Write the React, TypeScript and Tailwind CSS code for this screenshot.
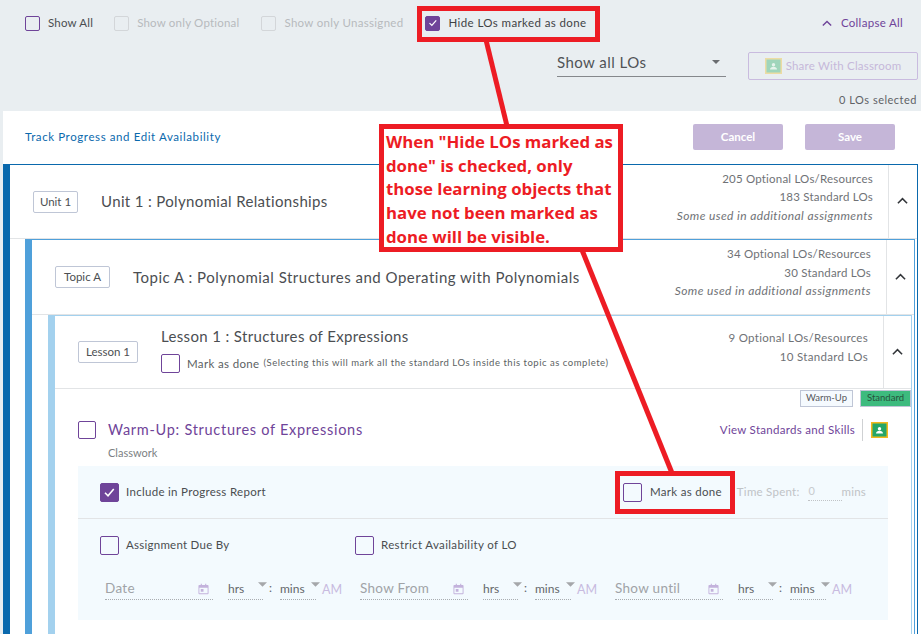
import React from "react";

const FONT = "font-['Lato','Noto_Sans',sans-serif]";

function Box({ size = 18, checked = false, muted = false }: { size?: number; checked?: boolean; muted?: boolean }) {
  const b = muted ? "border-[#d3d6d9]" : "border-[#6f4499]";
  return (
    <span
      style={{ width: size, height: size }}
      className={`shrink-0 flex items-center justify-center rounded-[2px] border ${b} ${checked ? "bg-[#6f4499]" : ""}`}
    >
      {checked && (
        <svg viewBox="0 0 16 16" className="w-[75%] h-[75%]" fill="none" stroke="#fff" strokeWidth="2">
          <path d="M2.5 8.5 L6.3 12.2 L13.5 3.8" />
        </svg>
      )}
    </span>
  );
}

function Classroom({ muted = false }: { muted?: boolean }) {
  return (
    <svg viewBox="0 0 17 16" className="w-[17px] h-[16px] shrink-0">
      <rect width="17" height="16" fill={muted ? "#ecdca4" : "#f4b81c"} />
      <rect x="1.5" y="1.5" width="14" height="13" fill={muted ? "#9fd5bb" : "#25a667"} />
      <circle cx="8.5" cy="6.8" r="1.7" fill={muted ? "#e5f3ec" : "#fff"} />
      <path d="M5 11.5c0-1.900 1.700-2.700 3.500-2.700s3.500.8 3.500 2.700z" fill={muted ? "#e5f3ec" : "#fff"} />
    </svg>
  );
}

function Chevron({ className = "" }: { className?: string }) {
  return (
    <svg viewBox="0 0 12 8" className={className} fill="none" stroke="currentColor" strokeWidth="1.7">
      <path d="M1 6.5 L6 1.500 L11 6.500" />
    </svg>
  );
}

function Caret({ className = "" }: { className?: string }) {
  return (
    <svg viewBox="0 0 10 5" className={className}>
      <path d="M0 0h10L5 5z" fill="currentColor" />
    </svg>
  );
}

function Header({
  label,
  labelW,
  title,
  titleClass,
  lines,
  h,
  textRight,
  cell,
}: {
  label: string;
  labelW: number;
  title: string;
  titleClass: string;
  lines: string[];
  h: number;
  textRight: number;
  cell: number;
}) {
  return (
    <div style={{ height: h }} className="flex border-b border-[#e2e4e6]">
      <div className="pl-[23px] flex-1 flex items-center">
        <span
          style={{ width: labelW }}
          className="h-[22px] flex items-center justify-center border border-[#bfc6d6] rounded-[2px] text-[11.5px] text-[#4c4f52] bg-white"
        >
          {label}
        </span>
        <span className={`ml-[23px] text-[15px] text-[#4b4e52] ${titleClass}`}>{title}</span>
      </div>
      <div
        style={{ paddingRight: textRight }}
        className="flex flex-col justify-center items-end pb-[8px] text-[11.5px] leading-[18.5px] tracking-[0.2px] text-[#6f7276]"
      >
        {lines.map((l) => (
          <span key={l}>{l}</span>
        ))}
        <span className="italic text-[12px] tracking-[0.4px]">Some used in additional assignments</span>
      </div>
      <div style={{ width: cell }} className="border-l border-[#e2e4e6] flex items-center justify-center pb-[1px] pr-[1px] text-[#33363a]">
        <Chevron className="w-[11px] h-[8px]" />
      </div>
    </div>
  );
}

function Calendar() {
  return (
    <svg viewBox="0 0 12 12" className="w-[11px] h-[12px]" fill="#c3b2dc">
      <path d="M1.5 1.5h1.5V.3h1.2v1.2h3.6V.3H9v1.2h1.5a1 1 0 0 1 1 1v8.2a1 1 0 0 1-1 1h-9a1 1 0 0 1-1-1V2.500a1 1 0 0 1 1-1zm0 3v6.200h9V4.500z" />
      <rect x="3" y="6" width="3" height="3" />
    </svg>
  );
}

function Picker({ w, text }: { w: number; text: string }) {
  return (
    <div style={{ width: w }} className="relative h-[22px] border-b border-dotted border-[#a9adb1] text-[12px] leading-[22px] text-[#63676b]">
      <span>{text}</span>
      <Caret className="absolute right-[-4px] top-[4px] w-[9px] h-[5px] text-[#a5a7aa]" />
    </div>
  );
}

function DateGroup({ label }: { label: string }) {
  return (
    <div className="w-[255px] flex items-start shrink-0">
      <div className="w-[108px] h-[22px] flex items-center justify-between border-b border-dotted border-[#a9adb1] pr-[4px]">
        <span className="text-[13.5px] tracking-[0.3px] text-[#a0a3a7]">{label}</span>
        <Calendar />
      </div>
      <div className="ml-[15px]">
        <Picker w={35} text="hrs" />
      </div>
      <span className="w-[17px] pl-[6px] text-[12px] leading-[20px] text-[#63676b]">:</span>
      <Picker w={36} text="mins" />
      <span className="ml-[6px] text-[12.5px] leading-[24px] text-[#c8bbe0]">AM</span>
    </div>
  );
}

export default function App() {
  return (
    <div className={`relative w-[921px] h-[634px] overflow-hidden bg-[#e9eef1] ${FONT}`}>
      {/* Filter bar */}
      <div className="h-[111px] relative">
        <div className="flex items-center h-[46px] pl-[25px] text-[11.5px] tracking-[0.2px]">
          <Box size={15} />
          <span className="ml-[8px] text-[#4a4d50]">Show All</span>
          <span className="ml-[21px]"><Box size={15} muted /></span>
          <span className="ml-[8px] text-[#b7babd]">Show only Optional</span>
          <span className="ml-[22px]"><Box size={15} muted /></span>
          <span className="ml-[8px] text-[#b7babd] tracking-[0.3px]">Show only Unassigned</span>
          <span className="ml-[22px]"><Box size={15} checked /></span>
          <span className="ml-[8px] text-[#3f4245] tracking-[0.4px]">Hide LOs marked as done</span>
          <span className="flex items-center ml-auto mr-[18px] text-[#6f4499]">
            <Chevron className="w-[10px] h-[7px]" />
            <span className="ml-[9px] tracking-[0.3px]">Collapse All</span>
          </span>
        </div>
        <div className="flex items-start justify-end pr-[3px] mt-[6px]">
          <div className="w-[169px] h-[25px] border-b border-[#85888c] flex items-center justify-between pb-[4px] pr-[6px] text-[15px] tracking-[0.45px] text-[#505356]">
            <span>Show all LOs</span>
            <Caret className="w-[8px] h-[4px] text-[#6a6d70]" />
          </div>
          <div className="ml-[22px] w-[170px] h-[28px] border border-[#c9bbdf] rounded-[2px] flex items-center justify-center gap-[4px] text-[11.5px] tracking-[0.2px] text-[#c6b8da]">
            <Classroom muted />
            <span>Share With Classroom</span>
          </div>
        </div>
        <div className="absolute right-[4px] top-[92px] text-[11px] tracking-[0.5px] text-[#5f6266]">0 LOs selected</div>
      </div>

      {/* Panel */}
      <div className="ml-[3px] bg-white h-[523px]">
        <div className="h-[53px] flex items-center pb-[2px] pl-[22px] pr-[26px]">
          <span className="text-[11.5px] tracking-[0.6px] text-[#0a69ad]">Track Progress and Edit Availability</span>
          <button className="ml-auto w-[90px] h-[26px] rounded-[2px] bg-[#c5b6d8] text-white text-[11.5px] font-bold">Cancel</button>
          <button className="ml-[22px] w-[90px] h-[26px] rounded-[2px] bg-[#c5b6d8] text-white text-[11.5px] font-bold">Save</button>
        </div>

        {/* Unit */}
        <div className="mr-[3px] border-t border-r border-l-[7px] border-[#0a69ad] h-[470px]">
          <Header
            label="Unit 1"
            labelW={45}
            title="Unit 1 : Polynomial Relationships"
            titleClass="tracking-[0.35px]"
            lines={["205 Optional LOs/Resources", "183 Standard LOs"]}
            h={74}
            textRight={15}
            cell={29}
          />
          {/* Topic */}
          <div className="ml-[15px] mr-[2px] border-t border-r border-l-[7px] border-[#4fa0da] h-[400px]">
            <Header
              label="Topic A"
              labelW={55}
              title="Topic A : Polynomial Structures and Operating with Polynomials"
              titleClass="tracking-[0.5px]"
              lines={["34 Optional LOs/Resources", "30 Standard LOs"]}
              h={75}
              textRight={15}
              cell={28}
            />
            {/* Lesson */}
            <div className="ml-[16px] mr-[2px] border-t border-r border-l-[7px] border-[#a3d1ee] h-[330px]">
              <div className="h-[73px] flex border-b border-[#e2e4e6]">
                <div className="pl-[23px] flex items-center">
                  <span className="w-[60px] h-[22px] flex items-center justify-center border border-[#bfc6d6] rounded-[2px] text-[11.5px] text-[#4c4f52]">
                    Lesson 1
                  </span>
                </div>
                <div className="ml-[23px] flex-1 pt-[10px]">
                  <div className="text-[15px] leading-[20px] tracking-[0.35px] text-[#4b4e52]">Lesson 1 : Structures of Expressions</div>
                  <div className="flex items-center mt-[8px]">
                    <Box size={19} />
                    <span className="ml-[7px] text-[11.5px] tracking-[0.35px] text-[#5c5f63]">Mark as done</span>
                    <span className="ml-[4px] text-[9.5px] tracking-[0.52px] text-[#5c5f63]">
                      (Selecting this will mark all the standard LOs inside this topic as complete)
                    </span>
                  </div>
                </div>
                <div className="flex flex-col items-end pt-[13px] pr-[15px] text-[11.5px] leading-[18.5px] tracking-[0.3px] text-[#6f7276]">
                  <span>9 Optional LOs/Resources</span>
                  <span>10 Standard LOs</span>
                </div>
                <div className="w-[28px] border-l border-[#e2e4e6] flex items-center justify-center pb-[1px] pr-[1px] text-[#33363a]">
                  <Chevron className="w-[11px] h-[8px]" />
                </div>
              </div>

              {/* Learning object */}
              <div>
                <div className="flex justify-end gap-[7px] h-[18px] pt-[1px] items-start">
                  <span className="w-[53px] h-[17px] border border-[#bfc6d6] bg-[#f5fafe] flex items-center justify-center text-[9.5px] text-[#55585c]">Warm-Up</span>
                  <span className="w-[51px] h-[17px] border border-[#bfc6d6] bg-[#3dbb7e] flex items-center justify-center text-[9.5px] text-[#27513c]">Standard</span>
                </div>
                <div className="pl-[23px] pr-[23px]">
                  <div className="flex items-center mt-[13px] h-[19px]">
                    <Box size={18} />
                    <span className="ml-[12px] text-[14.5px] tracking-[0.72px] text-[#6f4499]">Warm-Up: Structures of Expressions</span>
                    <span className="ml-auto text-[11.5px] tracking-[0.3px] text-[#6f4499]">View Standards and Skills</span>
                    <span className="ml-[7px] h-[22px] border-l border-[#cfd1d3]" />
                    <span className="ml-[8px]"><Classroom /></span>
                  </div>
                  <div className="ml-[30px] mt-[6px] h-[22px] text-[11px] leading-[16px] text-[#7c7f83]">Classwork</div>

                  <div className="bg-[#f3fafe] h-[154px] -mt-[1px]">
                    <div className="h-[53px] border-b border-[#e2e4e6] flex items-center pl-[22px]">
                      <Box size={19} checked />
                      <span className="ml-[7px] text-[11.5px] tracking-[0.3px] text-[#4a4d50]">Include in Progress Report</span>
                      <span className="ml-auto"><Box size={19} /></span>
                      <span className="ml-[8px] text-[11.5px] tracking-[0.3px] text-[#4a4d50]">Mark as done</span>
                      <span className="ml-[15px] text-[11.5px] tracking-[0.25px] text-[#c0c3c6]">Time Spent:</span>
                      <span className="ml-[8px] w-[34px] h-[17px] border-b border-dotted border-[#c0c3c6] text-[11px] leading-[13px] pl-[1px] text-[#c8cbce]">0</span>
                      <span className="mr-[22px] text-[11.5px] tracking-[0.2px] text-[#c0c3c6]">mins</span>
                    </div>
                    <div className="h-[54px] flex items-center pb-[2px] pl-[22px]">
                      <Box size={19} />
                      <span className="ml-[7px] w-[229px] text-[11.5px] tracking-[0.25px] text-[#4a4d50]">Assignment Due By</span>
                      <Box size={19} />
                      <span className="ml-[7px] text-[11.5px] tracking-[0.35px] text-[#4a4d50]">Restrict Availability of LO</span>
                    </div>
                    <div className="flex pl-[27px] pt-[5px]">
                      <DateGroup label="Date" />
                      <DateGroup label="Show From" />
                      <DateGroup label="Show until" />
                    </div>
                  </div>
                </div>
              </div>
            </div>
          </div>
        </div>
      </div>

      {/* Annotations */}
      <svg className="absolute inset-0 w-[921px] h-[634px] pointer-events-none" viewBox="0 0 921 634">
        <path d="M486 40 L507 126" stroke="#ed1c24" strokeWidth="5" fill="none" />
        <path d="M582 250 L672 473" stroke="#ed1c24" strokeWidth="5" fill="none" />
      </svg>
      <div className="absolute left-[417px] top-[6px] w-[183px] h-[36px] border-[5px] border-[#ed1c24]" />
      <div className="absolute left-[615px] top-[471px] w-[120px] h-[43px] border-[5px] border-[#ed1c24]" />
      <div className="absolute left-[379px] top-[124px] w-[244px] h-[128px] border-[5px] border-[#ed1c24] bg-white pl-[2px] pt-[1px] font-['Open_Sans',sans-serif] font-bold text-[16.8px] leading-[23.7px] text-[#ed1c24]">
        When "Hide LOs marked as done" is checked, only those learning objects that have not been marked as done will be visible.
      </div>
    </div>
  );
}
